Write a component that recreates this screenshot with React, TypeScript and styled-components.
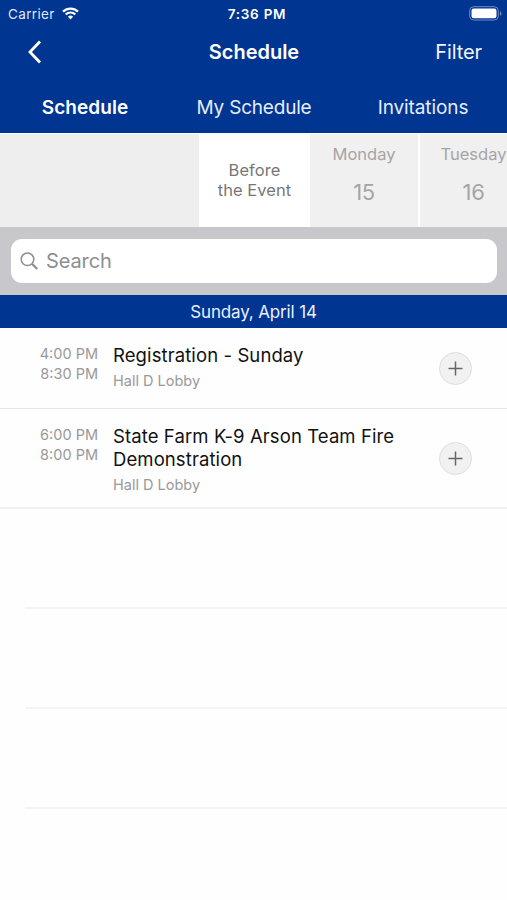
import React from "react";
import styled, { createGlobalStyle } from "styled-components";

const blue = "#003591";

const GlobalStyle = createGlobalStyle`
  * { box-sizing: border-box; }
  body { margin: 0; background: #fff; font-family: Inter, "Liberation Sans", sans-serif; }
  button, input { font: inherit; border: 0; padding: 0; background: none; }
`;

const Screen = styled.main`
  display: flex;
  flex-direction: column;
  width: 507px;
  height: 900px;
  overflow: hidden;
  background: #fefefe;
`;

const Header = styled.header`
  height: 133px;
  background: ${blue};
  color: #fff;
`;

const Bar = styled.div<{ $height: number }>`
  display: grid;
  grid-template-columns: repeat(3, 1fr);
  align-items: center;
  height: ${(p) => p.$height}px;
`;

const Carrier = styled.div`
  display: flex;
  align-items: center;
  gap: 7px;
  padding-left: 8px;
  font-size: 13.5px;
  letter-spacing: 0.35px;
  color: #dfe8fa;
`;

const Clock = styled.div`
  padding-left: 7px;
  text-align: center;
  font-size: 13.5px;
  font-weight: 600;
  letter-spacing: 0.75px;
`;

const Battery = styled.svg`
  justify-self: end;
  margin-right: 5px;
`;

const BackButton = styled.button`
  display: flex;
  justify-self: start;
  margin-left: 27px;
  color: #fff;
`;

const Title = styled.h1`
  margin: 0;
  padding-left: 1px;
  text-align: center;
  font-size: 20px;
  font-weight: 600;
  letter-spacing: -0.02px;
`;

const FilterButton = styled.button`
  justify-self: end;
  margin-right: 25px;
  color: #f0f4ff;
  font-size: 20px;
  letter-spacing: -0.1px;
`;

const Tab = styled.button<{ $active?: boolean; $tracking: number }>`
  padding: 4px 0 0 1px;
  color: ${(p) => (p.$active ? "#fff" : "#e6edfb")};
  font-size: 19px;
  font-weight: ${(p) => (p.$active ? 600 : 400)};
  letter-spacing: ${(p) => p.$tracking}px;
`;

const DayStrip = styled.div`
  display: grid;
  grid-template-columns: 199px 111px 108px 109px;
  height: 94px;
  padding-top: 1px;
  background: #fff;
`;

const EmptyDay = styled.div`
  background: #eee;
`;

const Day = styled.div`
  display: flex;
  flex-direction: column;
  align-items: center;
  gap: 13px;
  padding-top: 9px;
  background: #f0f0f0;
  color: #a5a5a5;
  font-size: 16.5px;
  line-height: 22px;
  & + & { margin-left: 2px; }
`;

const DayNumber = styled.span`
  font-size: 22px;
  line-height: 28px;
  letter-spacing: -0.3px;
`;

const SelectedDay = styled.div`
  display: flex;
  align-items: center;
  justify-content: center;
  padding-bottom: 1px;
  text-align: center;
  color: #777;
  font-size: 16.5px;
  line-height: 20px;
  letter-spacing: 0.06px;
`;

const SearchBar = styled.div`
  height: 68px;
  padding: 12px 10px;
  background: #c8c8cc;
`;

const SearchField = styled.label`
  display: flex;
  align-items: center;
  gap: 7px;
  height: 44px;
  margin-left: 1px;
  padding-left: 9px;
  border-radius: 11px;
  background: #fff;
`;

const SearchInput = styled.input`
  flex: 1;
  min-width: 0;
  outline: 0;
  font-size: 20px;
  letter-spacing: -0.1px;
  &::placeholder { color: #8e8e92; opacity: 1; }
`;

const DateHeading = styled.h2`
  height: 33px;
  margin: 0;
  background: ${blue};
  color: #eaf0ff;
  text-align: center;
  font-size: 17px;
  font-weight: 400;
  line-height: 34px;
  letter-spacing: -0.15px;
`;

const Session = styled.article<{ $height: number }>`
  display: grid;
  grid-template-columns: 98px 311px 1fr;
  column-gap: 15px;
  height: ${(p) => p.$height}px;
  border-bottom: 1px solid #e6e6e6;
  &:last-of-type { border-bottom: 2px solid #f1f1f1; }
`;

const Times = styled.div`
  padding-top: 16px;
  text-align: right;
  color: #999;
  font-size: 14.5px;
  line-height: 20px;
`;

const SessionName = styled.h3`
  margin: 16px 0 0;
  color: #111;
  font-size: 18.5px;
  font-weight: 400;
  line-height: 23px;
  letter-spacing: 0.1px;
`;

const Place = styled.p`
  margin: 4px 0 0;
  color: #999;
  font-size: 14.5px;
  line-height: 20px;
`;

const AddButton = styled.button`
  display: flex;
  align-self: center;
  align-items: center;
  justify-content: center;
  width: 33px;
  height: 33px;
  border: 1px solid #dedede;
  border-radius: 50%;
  background: #f1f1f1;
`;

const EmptyRow = styled.div`
  flex: none;
  height: 100px;
  margin-left: 25px;
  border-bottom: 2px solid #f4f4f4;
`;

const sessions = [
  { start: "4:00 PM", end: "8:30 PM", name: "Registration - Sunday", height: 81 },
  { start: "6:00 PM", end: "8:00 PM", name: "State Farm K-9 Arson Team Fire Demonstration", height: 100 },
];

export default function App() {
  return (
    <>
      <GlobalStyle />
      <Screen>
        <Header>
          <Bar $height={27}>
            <Carrier>
              Carrier
              <svg width="17" height="13" viewBox="0 0 17 13" fill="none" stroke="#fff" strokeWidth="2.2">
                <path d="M1 4.6a10.8 10.8 0 0 1 15 0M3.7 7.5a6.8 6.8 0 0 1 9.6 0" />
                <path d="M8.5 12.5 5.9 9.8a3.8 3.8 0 0 1 5.2 0Z" fill="#fff" stroke="none" />
              </svg>
            </Carrier>
            <Clock>7:36 PM</Clock>
            <Battery width="33" height="15" viewBox="0 0 33 15">
              <rect x="0.7" y="0.7" width="28.6" height="13.3" rx="4" fill="none" stroke="#6e8dc5" />
              <rect x="2.5" y="2.4" width="25" height="9.8" rx="2.3" fill="#fff" />
              <path d="M31 5v5q1.5-1 1.5-2.5T31 5" fill="#6e8dc5" />
            </Battery>
          </Bar>
          <Bar $height={50}>
            <BackButton aria-label="Back">
              <svg width="15" height="24" viewBox="0 0 15 24" fill="none" stroke="currentColor" strokeWidth="2.8">
                <path d="M13 1.5 3 12l10 10.5" />
              </svg>
            </BackButton>
            <Title>Schedule</Title>
            <FilterButton>Filter</FilterButton>
          </Bar>
          <Bar $height={56}>
            <Tab $active $tracking={0.07}>Schedule</Tab>
            <Tab $tracking={-0.2}>My Schedule</Tab>
            <Tab $tracking={-0.1}>Invitations</Tab>
          </Bar>
        </Header>
        <DayStrip>
          <EmptyDay />
          <SelectedDay>Before<br />the Event</SelectedDay>
          <Day>Monday<DayNumber>15</DayNumber></Day>
          <Day>Tuesday<DayNumber>16</DayNumber></Day>
        </DayStrip>
        <SearchBar>
          <SearchField>
            <svg width="19" height="19" viewBox="0 0 19 19" fill="none" stroke="#8e8e92" strokeWidth="1.5">
              <circle cx="7.5" cy="7.3" r="6.3" />
              <path d="m12.2 12 5 5" strokeWidth="2.2" />
            </svg>
            <SearchInput placeholder="Search" />
          </SearchField>
        </SearchBar>
        <DateHeading>Sunday, April 14</DateHeading>
        {sessions.map((s) => (
          <Session key={s.name} $height={s.height}>
            <Times>{s.start}<br />{s.end}</Times>
            <div>
              <SessionName>{s.name}</SessionName>
              <Place>Hall D Lobby</Place>
            </div>
            <AddButton aria-label="Add to my schedule">
              <svg width="15" height="15" viewBox="0 0 15 15" stroke="#666" strokeWidth="1.5">
                <path d="M7.5 .5v14M.5 7.5h14" />
              </svg>
            </AddButton>
          </Session>
        ))}
        <EmptyRow />
        <EmptyRow />
        <EmptyRow />
      </Screen>
    </>
  );
}
